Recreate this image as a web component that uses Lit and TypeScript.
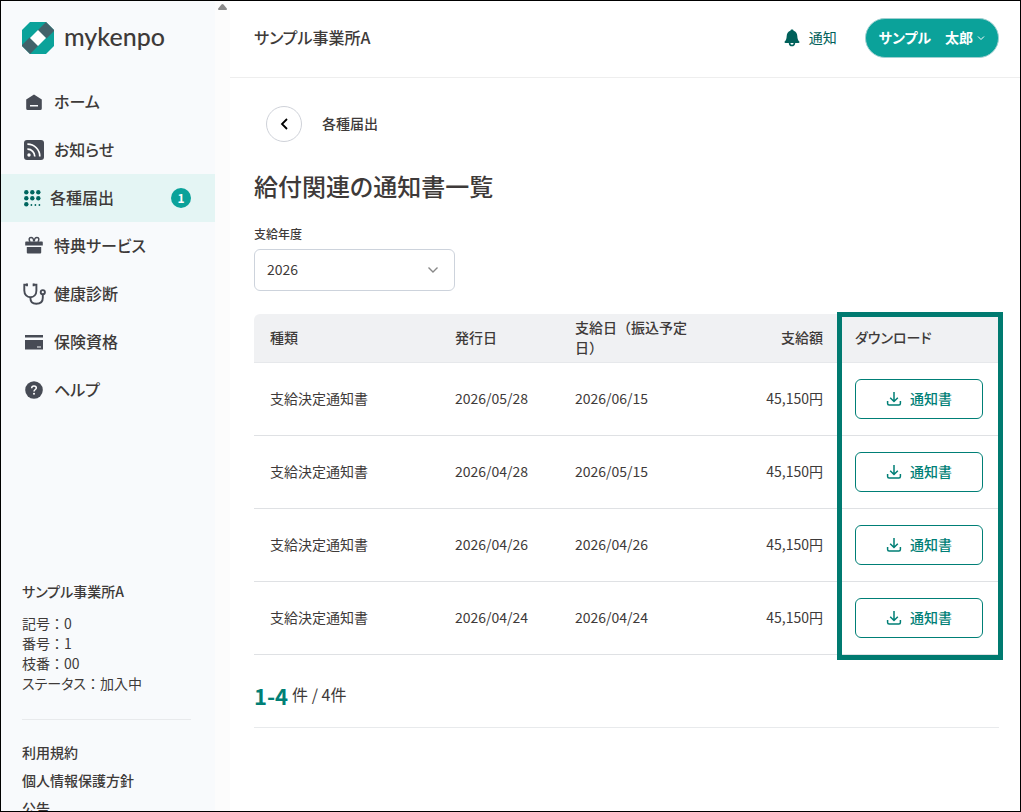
import { LitElement, html, css, svg } from "lit";
import { customElement, state } from "lit/decorators.js";
import { classMap } from "lit/directives/class-map.js";

interface NavItem {
  label: string;
  icon: unknown;
  badge?: number;
}

interface Notice {
  kind: string;
  issued: string;
  paid: string;
  amount: string;
}

const homeIcon = svg`<svg width="20" height="20" viewBox="0 0 20 20"><path fill="currentColor" fill-rule="evenodd" d="M10 2.600 17.800 7.600V16.400Q17.800 18 16.200 18H3.800Q2.200 18 2.200 16.400V7.600ZM6 13V14.600H14V13Z"/></svg>`;
const newsIcon = svg`<svg width="20" height="20" viewBox="0 0 20 20"><rect width="20" height="20" rx="3" fill="currentColor"/><circle cx="5" cy="15" r="1.7" fill="#fff"/><path d="M3.4 9.2a7.2 7.2 0 0 1 7.4 7.4M3.4 4.2a12.2 12.2 0 0 1 12.4 12.4" fill="none" stroke="#fff" stroke-width="1.7"/></svg>`;
const gridIcon = svg`<svg width="17" height="17" viewBox="0 0 17 17"><g fill="currentColor"><circle cx="2.3" cy="2.3" r="2.2"/><circle cx="8.3" cy="2.3" r="2.2"/><circle cx="14.3" cy="2.3" r="2.2"/><circle cx="2.3" cy="8.3" r="2.2"/><circle cx="8.3" cy="8.3" r="2.2"/><circle cx="14.3" cy="8.3" r="2.2"/><circle cx="2.3" cy="14.3" r="2.2"/><circle cx="7.4" cy="15" r=".9"/><circle cx="11.4" cy="15" r=".9"/><circle cx="15.4" cy="15" r=".9"/></g></svg>`;
const giftIcon = svg`<svg width="20" height="20" viewBox="0 0 20 20"><path fill="currentColor" d="M1.2 6.4Q1.2 5.6 2 5.6H18Q18.800 5.600 18.800 6.400V9.600H1.200ZM2.800 11H17.200V16.600Q17.200 17.600 16.200 17.600H3.800Q2.800 17.600 2.800 16.600Z"/><path fill="none" stroke="currentColor" stroke-width="1.5" d="M9.700 5.500C9.700 2.500 8.600 1.400 7 1.400 4.800 1.400 4.600 4 6.200 5.800M10.300 5.500C10.300 2.500 11.400 1.400 13 1.400 15.200 1.400 15.400 4 13.800 5.800"/></svg>`;
const stethoscopeIcon = svg`<svg width="24" height="24" viewBox="0 0 24 24"><g fill="none" stroke="currentColor" stroke-width="1.9"><path d="M5.400 2.800H2.300V8.500C2.300 12.500 5 15.200 8.400 15.200S14.400 12.500 14.400 8.500V2.800H11.400M8.400 15.200V16C8.400 19.600 10.800 21.800 14.300 21.800 18.200 21.800 20.800 19.500 20.800 15.700V12.600"/><circle cx="20.800" cy="10.200" r="2.100"/><path d="M5 1.400V4.200M11.600 1.400V4.200"/></g></svg>`;
const cardIcon = svg`<svg width="20" height="20" viewBox="0 0 20 20"><path fill="currentColor" fill-rule="evenodd" d="M1 3H19V5.400H1ZM1 8H19V17.600H1ZM13 14.400V15.600H17V14.400Z"/></svg>`;
const helpIcon = svg`<svg width="20" height="20" viewBox="0 0 20 20"><circle cx="10" cy="10" r="8.800" fill="currentColor"/><path d="M7.700 8.200C7.700 6.800 8.700 6 10 6S12.300 6.800 12.300 8C12.300 9.500 10 9.600 10 11.600" fill="none" stroke="#fff" stroke-width="1.500"/><circle cx="10" cy="13.700" r="1" fill="#fff"/></svg>`;
const bellIcon = svg`<svg width="16" height="18" viewBox="0 0 16 18"><path fill="currentColor" d="M8 0.600C9 .6 9.500 1.100 9.600 1.800 12 2.500 13.200 4.500 13.300 7 13.400 10 14.200 11.400 15.300 12.600 15.700 13.300 15.400 14 14.600 14H1.400C.6 14 .3 13.300.7 12.600 1.800 11.400 2.600 10 2.700 7 2.800 4.500 4 2.500 6.400 1.800 6.500 1.100 7 .6 8 .6Z"/><path fill="none" stroke="currentColor" stroke-width="1.600" d="M5.600 14C5.600 17.400 10.400 17.400 10.400 14"/></svg>`;
const downloadIcon = svg`<svg width="16" height="16" viewBox="0 0 16 16"><g fill="none" stroke="currentColor" stroke-width="1.500"><path d="M8 1V10.500M4.200 6.800 8 10.500 11.800 6.800"/><path d="M1.600 10V12.500Q1.600 14 3.100 14H12.900Q14.400 14 14.400 12.500V10"/></g></svg>`;

@customElement("app-root")
export class AppRoot extends LitElement {
  @state() private year = "2026";

  private nav: NavItem[] = [
    { label: "ホーム", icon: homeIcon },
    { label: "お知らせ", icon: newsIcon },
    { label: "各種届出", icon: gridIcon, badge: 1 },
    { label: "特典サービス", icon: giftIcon },
    { label: "健康診断", icon: stethoscopeIcon },
    { label: "保険資格", icon: cardIcon },
    { label: "ヘルプ", icon: helpIcon },
  ];

  private notices: Notice[] = [
    { kind: "支給決定通知書", issued: "2026/05/28", paid: "2026/06/15", amount: "45,150円" },
    { kind: "支給決定通知書", issued: "2026/04/28", paid: "2026/05/15", amount: "45,150円" },
    { kind: "支給決定通知書", issued: "2026/04/26", paid: "2026/04/26", amount: "45,150円" },
    { kind: "支給決定通知書", issued: "2026/04/24", paid: "2026/04/24", amount: "45,150円" },
  ];

  static styles = css`
    :host {
      display: flex;
      box-sizing: border-box;
      height: 100vh;
      overflow: hidden;
      border: 1px solid #000;
      background: #fff;
      color: #3e3a39;
      font-family: "Noto Sans CJK JP", sans-serif;
      font-size: 14px;
      line-height: 20px;
    }
    * { box-sizing: border-box; }
    a { color: inherit; text-decoration: none; }
    button, select { font: inherit; margin: 0; }
    svg { display: block; flex: none; }
    .kana { font-feature-settings: "palt"; }
    /* The Japanese face sits low in its line box; this centres it optically. */
    .label { padding-bottom: 2px; }

    .side { flex: none; display: flex; width: 229px; }
    .side-body {
      flex: 1;
      display: flex;
      flex-direction: column;
      min-width: 0;
      background: #f8fafc;
    }
    .track {
      flex: none;
      width: 15px;
      padding-top: 3px;
      background: #fcfcfc;
    }
    .logo {
      display: flex;
      align-items: center;
      gap: 10px;
      height: 77px;
      padding: 0 21px 3px;
      font-family: Lato, sans-serif;
      font-size: 25px;
      line-height: 32px;
      font-weight: 500;
    }
    .logo-text { padding-bottom: 4px; }
    .nav { display: flex; flex-direction: column; }
    .nav-item {
      display: flex;
      align-items: center;
      height: 48px;
      gap: 8px;
      padding: 0 24px 0 21px;
      font-size: 16px;
      line-height: 24px;
      font-weight: 500;
    }
    .nav-item.active { background: #e4f5f4; }
    .nav-icon {
      display: flex;
      justify-content: center;
      width: 24px;
      color: #474b55;
    }
    .active .nav-icon { width: 20px; color: #00665f; }
    .nav-label { flex: 1; }
    .badge {
      width: 20px;
      height: 20px;
      border-radius: 50%;
      background: #0ba29a;
      color: #fff;
      font-size: 12px;
      line-height: 20px;
      font-weight: 700;
      text-align: center;
    }
    .account { margin: auto 24px 0 21px; padding-bottom: 26px; border-bottom: 1px solid #e8eaec; }
    .account-name { margin: 0 0 12px; font-size: 14px; line-height: 20px; font-weight: 500; }
    .account p { margin: 0; }
    .links {
      display: flex;
      flex-direction: column;
      height: 91px;
      padding: 18px 21px 0;
      overflow: hidden;
      font-weight: 500;
      line-height: 28px;
    }
    .links a { flex: none; }

    .main { flex: 1; min-width: 0; }
    .top {
      display: flex;
      align-items: center;
      height: 77px;
      padding: 0 21px 2px 24px;
      border-bottom: 1px solid #eeeeee;
    }
    .office { flex: 1; font-size: 16px; line-height: 24px; font-weight: 500; }
    .notify {
      display: flex;
      align-items: center;
      gap: 9px;
      margin-right: 28px;
      color: #00605a;
    }
    .user {
      display: flex;
      align-items: center;
      gap: 4px;
      height: 40px;
      padding: 0 13px;
      border: 1px solid #9fcfd0;
      border-radius: 20px;
      background: #0ba29a;
      color: #fff;
      font-weight: 700;
    }
    .content { padding: 28px 21px 0 24px; }
    .crumb {
      display: flex;
      align-items: center;
      gap: 20px;
      padding-left: 12px;
      font-weight: 500;
    }
    .back {
      display: grid;
      place-items: center;
      width: 36px;
      height: 36px;
      padding: 0;
      border: 1px solid #cfd2d9;
      border-radius: 50%;
      background: #fff;
      color: #000;
    }
    h1 { margin: 26px 0 21px; font-size: 24px; line-height: 36px; font-weight: 500; }
    .field { display: flex; flex-direction: column; gap: 6px; width: 201px; }
    .field label { font-size: 12px; line-height: 18px; font-weight: 500; }
    .select { display: grid; align-items: center; color: #888; }
    .select > * { grid-area: 1 / 1; }
    .select svg { justify-self: end; margin-right: 16px; pointer-events: none; }
    select {
      appearance: none;
      width: 100%;
      height: 42px;
      padding: 0 12px 2px;
      border: 1px solid #cdd3dc;
      border-radius: 6px;
      background: #fff;
      color: #3e3a39;
    }
    .table-area { position: relative; margin-top: 23px; }
    table { width: 100%; table-layout: fixed; border-collapse: separate; border-spacing: 0; }
    .c-kind { width: 185px; }
    .c-issued { width: 120px; }
    .c-paid { width: 146px; }
    .c-amount { width: 134px; }
    .c-file { width: 160px; }
    th, td { padding: 0 16px 2px; text-align: left; border-bottom: 1px solid #dfe1e4; }
    th { height: 49px; background: #f0f1f3; font-weight: 500; border-bottom-color: #e6e8eb; }
    th:first-child { border-top-left-radius: 6px; }
    td { height: 73px; }
    td.file { padding-bottom: 0; }
    .amount { text-align: right; }
    .download {
      display: flex;
      align-items: center;
      justify-content: center;
      gap: 8px;
      width: 100%;
      height: 40px;
      border: 1px solid #007f76;
      border-radius: 6px;
      background: #fff;
      color: #007f76;
      font-weight: 500;
    }
    .highlight {
      position: absolute;
      top: -2px;
      right: -4px;
      bottom: -5px;
      width: 166px;
      border: 5px solid #007a70;
      pointer-events: none;
    }
    .pager {
      display: flex;
      align-items: center;
      gap: 4px;
      height: 73px;
      padding-top: 8px;
      border-bottom: 1px solid #e8eaec;
      font-size: 16px;
    }
    .range { color: #007f76; font-size: 22px; line-height: 32px; font-weight: 700; }
  `;

  render() {
    return html`
      <aside class="side">
        <div class="side-body">
          <a class="logo" href="#">
            <svg width="32" height="32" viewBox="0 0 32 32" aria-hidden="true">
              <path fill="#0ba29a" d="M8 0H24L32 8V24L24 32H8L0 24V8Z" />
              <path fill="#42626a" d="M24 0 32 8V9L24.500 16.500 15.500 8.500ZM8 32 0 24V23L7.500 15.500 16.500 23.500Z" />
              <path fill="#fff" d="M16 8 24 16 16 24 8 16Z" />
            </svg>
            <span class="logo-text">mykenpo</span>
          </a>
          <nav class="nav">
            ${this.nav.map(
              (item) => html`
                <a href="#" class=${classMap({ "nav-item": true, active: !!item.badge })}>
                  <span class="nav-icon">${item.icon}</span>
                  <span class="nav-label label kana">${item.label}</span>
                  ${item.badge ? html`<span class="badge">${item.badge}</span>` : null}
                </a>
              `
            )}
          </nav>
          <section class="account">
            <h2 class="account-name kana">サンプル事業所A</h2>
            <p>記号：0</p>
            <p>番号：1</p>
            <p>枝番：00</p>
            <p><span class="kana">ステータス</span>：加入中</p>
          </section>
          <div class="links">
            <a href="#">利用規約</a>
            <a href="#">個人情報保護方針</a>
            <a href="#">公告</a>
          </div>
        </div>
        <div class="track" aria-hidden="true">
          <svg width="15" height="7" viewBox="0 0 15 7"><path fill="#8a8a8a" d="M6.500.600Q7.500-.4 8.500.600L11.800 4.600Q12.500 6 11 6H4Q2.500 6 3.200 4.600Z" /></svg>
        </div>
      </aside>
      <div class="main">
        <header class="top">
          <span class="office label kana">サンプル事業所A</span>
          <a class="notify" href="#">${bellIcon}<span class="label">通知</span></a>
          <button class="user" type="button">
            <span class="label"><span class="kana">サンプル</span>　太郎</span>
            <svg width="8" height="8" viewBox="0 0 8 8"><path d="M1 2.500 4 5.500 7 2.500" fill="none" stroke="currentColor" /></svg>
          </button>
        </header>
        <main class="content">
          <div class="crumb">
            <button class="back" type="button" aria-label="戻る">
              <svg width="14" height="14" viewBox="0 0 14 14"><path d="M10 2 5 7 10 12" fill="none" stroke="currentColor" stroke-width="1.800" /></svg>
            </button>
            <span class="label">各種届出</span>
          </div>
          <h1 class="kana">給付関連の通知書一覧</h1>
          <div class="field">
            <label for="year">支給年度</label>
            <div class="select">
              <select id="year" .value=${this.year} @change=${(e: Event) => (this.year = (e.target as HTMLSelectElement).value)}>
                <option value="2026">2026</option>
              </select>
              <svg width="12" height="12" viewBox="0 0 12 12"><path d="M1.500 3.500 6 8 10.500 3.500" fill="none" stroke="currentColor" stroke-width="1.400" /></svg>
            </div>
          </div>
          <div class="table-area">
            <table>
              <colgroup>
                <col class="c-kind" /><col class="c-issued" /><col class="c-paid" /><col class="c-amount" /><col class="c-file" />
              </colgroup>
              <thead>
                <tr>
                  <th scope="col">種類</th>
                  <th scope="col">発行日</th>
                  <th scope="col">支給日（振込予定日）</th>
                  <th scope="col" class="amount">支給額</th>
                  <th scope="col" class="kana">ダウンロード</th>
                </tr>
              </thead>
              <tbody>
                ${this.notices.map(
                  (n) => html`
                    <tr>
                      <td>${n.kind}</td>
                      <td>${n.issued}</td>
                      <td>${n.paid}</td>
                      <td class="amount">${n.amount}</td>
                      <td class="file">
                        <button class="download" type="button">${downloadIcon}<span class="label">通知書</span></button>
                      </td>
                    </tr>
                  `
                )}
              </tbody>
            </table>
            <div class="highlight"></div>
          </div>
          <div class="pager">
            <span class="range">1-4</span><span class="label">件 / 4件</span>
          </div>
        </main>
      </div>
    `;
  }
}
